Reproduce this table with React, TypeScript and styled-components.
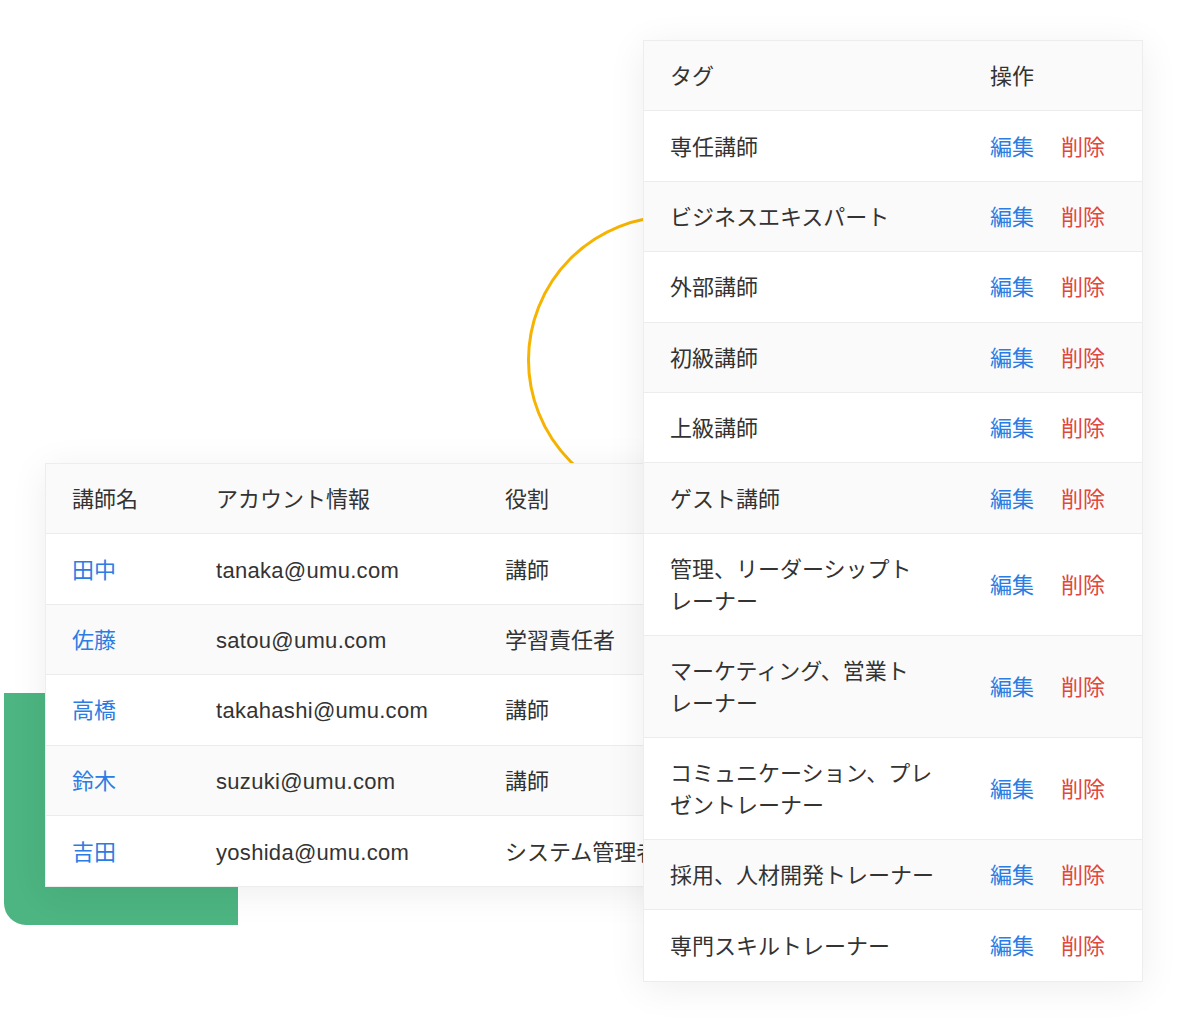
import React from "react";
import styled, { createGlobalStyle } from "styled-components";

const Global = createGlobalStyle`
  html, body { margin: 0; padding: 0; background: #ffffff; }
  body {
    font-family: "Liberation Sans", "Noto Sans CJK JP", sans-serif;
    color: #333333;
    -webkit-font-smoothing: antialiased;
  }
`;

const Stage = styled.div`
  position: relative;
  width: 1189px;
  height: 1030px;
  overflow: hidden;
  background: #ffffff;
`;

const GreenBlock = styled.div`
  position: absolute;
  left: 4px;
  top: 693px;
  width: 234px;
  height: 232px;
  background: #4cb581;
  border-bottom-left-radius: 22px;
`;

const Ring = styled.div`
  position: absolute;
  left: 527px;
  top: 215px;
  width: 290px;
  height: 290px;
  box-sizing: border-box;
  border: 3px solid #f6b300;
  border-radius: 50%;
`;

const Card = styled.div<{ $left: number; $top: number; $width: number; $z: number }>`
  position: absolute;
  left: ${(p) => p.$left}px;
  top: ${(p) => p.$top}px;
  width: ${(p) => p.$width}px;
  z-index: ${(p) => p.$z};
  background: #ffffff;
  border: 1px solid #ededed;
  box-sizing: border-box;
  box-shadow: 0 6px 36px rgba(0, 0, 0, 0.07);
  font-size: 22px;
  line-height: 32px;
`;

const Row = styled.div<{ $cols: string; $shade?: boolean; $head?: boolean; $last?: boolean }>`
  display: grid;
  grid-template-columns: ${(p) => p.$cols};
  align-items: center;
  background: ${(p) => (p.$shade || p.$head ? "#fafafa" : "#ffffff")};
  border-bottom: ${(p) => (p.$last ? "none" : "1px solid #ececec")};
  box-sizing: border-box;
  min-height: 70.4px;
`;

const Cell = styled.div<{ $tone?: "text" | "link"; $latin?: boolean }>`
  padding: 20px 0 17px 26px;
  white-space: nowrap;
  letter-spacing: ${(p) => (p.$latin ? "0.3px" : "0")};
  color: ${(p) => (p.$tone === "link" ? "#2b7de3" : "#333333")};
`;

const Actions = styled.div`
  display: flex;
  gap: 27px;
  padding: 3px 0 0 26px;
`;

const Action = styled.span<{ $danger?: boolean }>`
  color: ${(p) => (p.$danger ? "#e0473e" : "#2b7de3")};
  cursor: pointer;
`;

const Line = styled.span`
  display: block;
`;

const staffCols = "144px 289px 1fr";
const tagCols = "320px 1fr";

const staff = [
  { name: "田中", mail: "tanaka@umu.com", role: "講師" },
  { name: "佐藤", mail: "satou@umu.com", role: "学習責任者" },
  { name: "高橋", mail: "takahashi@umu.com", role: "講師" },
  { name: "鈴木", mail: "suzuki@umu.com", role: "講師" },
  { name: "吉田", mail: "yoshida@umu.com", role: "システム管理者" },
];

const tags: string[][] = [
  ["専任講師"],
  ["ビジネスエキスパート"],
  ["外部講師"],
  ["初級講師"],
  ["上級講師"],
  ["ゲスト講師"],
  ["管理、リーダーシップト", "レーナー"],
  ["マーケティング、営業ト", "レーナー"],
  ["コミュニケーション、プレ", "ゼントレーナー"],
  ["採用、人材開発トレーナー"],
  ["専門スキルトレーナー"],
];

export default function App() {
  return (
    <>
      <Global />
      <Stage>
        <GreenBlock />
        <Ring />
        <Card $left={45} $top={463} $width={660} $z={2}>
          <Row $cols={staffCols} $head>
            <Cell>講師名</Cell>
            <Cell>アカウント情報</Cell>
            <Cell>役割</Cell>
          </Row>
          {staff.map((s, i) => (
            <Row key={s.mail} $cols={staffCols} $shade={i % 2 === 1} $last={i === staff.length - 1}>
              <Cell $tone="link">{s.name}</Cell>
              <Cell $latin>{s.mail}</Cell>
              <Cell>{s.role}</Cell>
            </Row>
          ))}
        </Card>
        <Card $left={643} $top={40} $width={500} $z={3}>
          <Row $cols={tagCols} $head>
            <Cell>タグ</Cell>
            <Cell>操作</Cell>
          </Row>
          {tags.map((t, i) => (
            <Row key={t.join("")} $cols={tagCols} $shade={i % 2 === 1} $last={i === tags.length - 1}>
              <Cell>
                {t.map((l) => (
                  <Line key={l}>{l}</Line>
                ))}
              </Cell>
              <Actions>
                <Action>編集</Action>
                <Action $danger>削除</Action>
              </Actions>
            </Row>
          ))}
        </Card>
      </Stage>
    </>
  );
}
